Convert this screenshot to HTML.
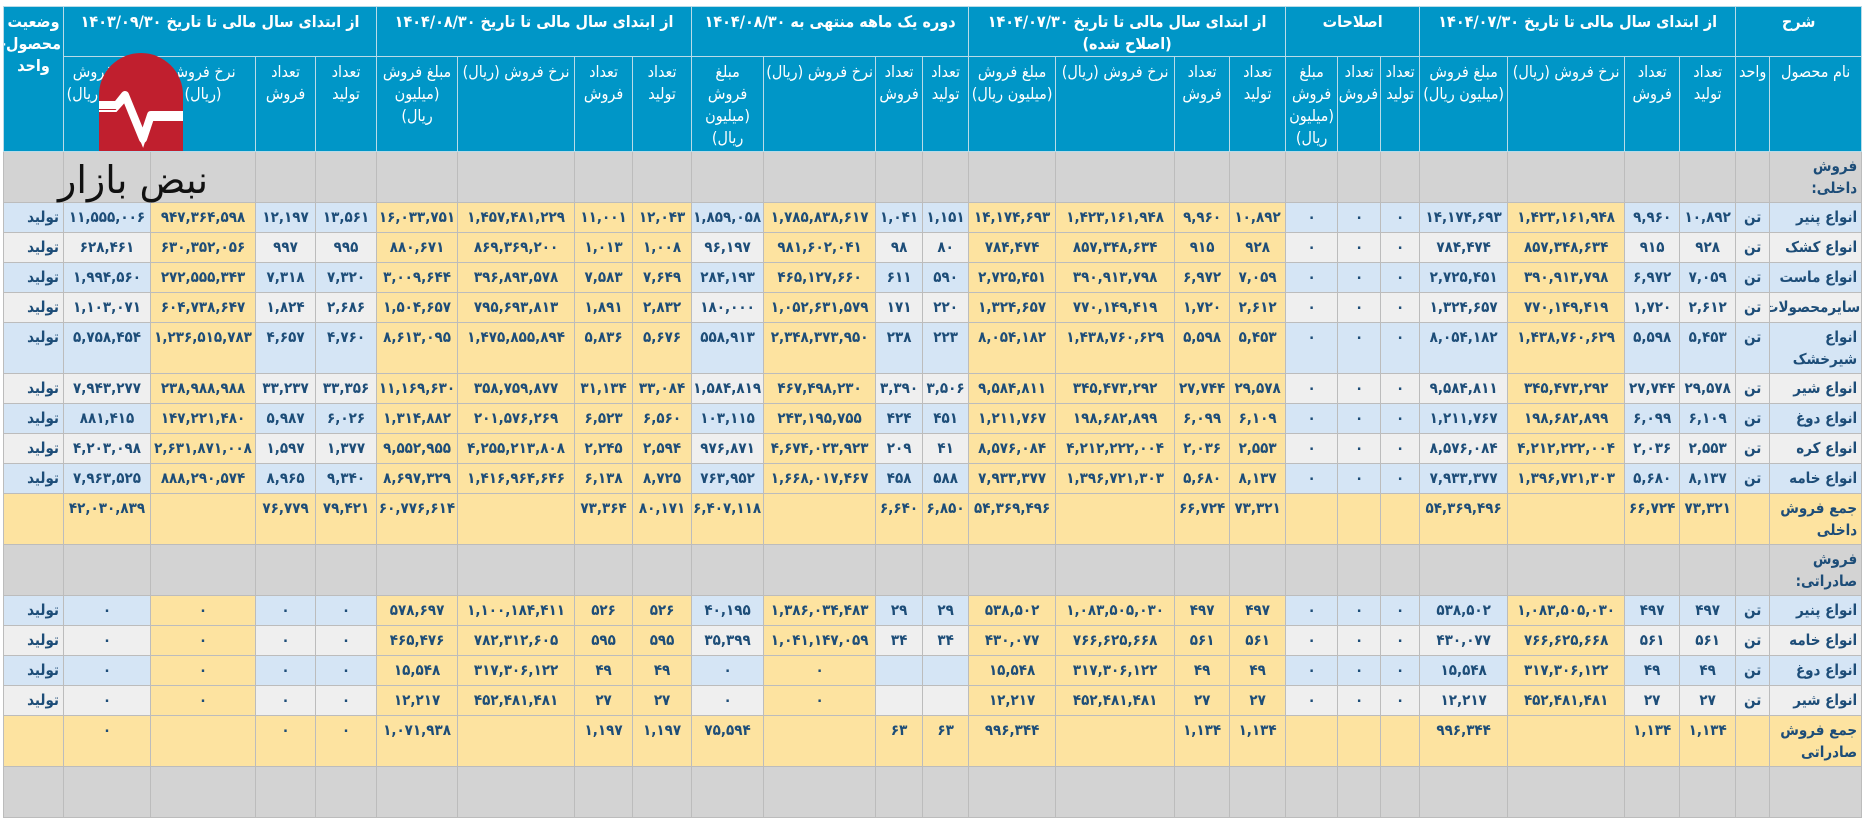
<!DOCTYPE html>
<html><head><meta charset="utf-8">
<style>
html,body{margin:0;padding:0;background:#fff;width:1865px;height:773px;overflow:hidden}
table{position:absolute;left:3px;top:6px;width:1858px;border-collapse:collapse;table-layout:fixed;direction:rtl;font-family:"DejaVu Sans Condensed","DejaVu Sans","Liberation Sans",sans-serif;font-size:15px;color:#1d4d78}
td,th{border:1px solid #bcbcbc;padding:0 2px;overflow:hidden;white-space:nowrap;text-align:center;vertical-align:top;font-weight:bold;box-sizing:border-box}
td{line-height:18px;padding-top:5px}
th{background:#0096c7;color:#fff;font-weight:normal;font-size:16px;line-height:22px;padding-top:4px;white-space:normal;border-color:#b9dbe8}
tr.h1 th{font-weight:bold;height:50px}
tr.h2 th{height:95px}
td.n{text-align:right;padding-right:4px;white-space:normal;line-height:22px;padding-top:3px}
.b td{background:#d5e5f5}.g td{background:#efefef}
td.y,.t td{background:#fde3a0}
.s td{background:#d3d3d3;height:51px}
tr.r td{height:30px}
tr.t td{height:51px}
.logo{position:absolute;left:99px;top:53px}
.brand{position:absolute;left:58px;top:158px;font-family:"DejaVu Sans","Liberation Sans",sans-serif;font-size:38px;color:#111;direction:rtl}
</style></head><body>
<table>
<colgroup>
<col style="width:92px"><col style="width:34px">
<col style="width:56px"><col style="width:55px"><col style="width:117px"><col style="width:88px">
<col style="width:39px"><col style="width:43px"><col style="width:52px">
<col style="width:56px"><col style="width:55px"><col style="width:119px"><col style="width:87px">
<col style="width:46px"><col style="width:47px"><col style="width:112px"><col style="width:72px">
<col style="width:59px"><col style="width:58px"><col style="width:117px"><col style="width:81px">
<col style="width:61px"><col style="width:60px"><col style="width:105px"><col style="width:87px">
<col style="width:60px">
</colgroup>
<tr class="h1">
<th colspan="2">شرح</th>
<th colspan="4">از ابتدای سال مالی تا تاریخ ۱۴۰۴/۰۷/۳۰</th>
<th colspan="3">اصلاحات</th>
<th colspan="4">از ابتدای سال مالی تا تاریخ ۱۴۰۴/۰۷/۳۰ (اصلاح شده)</th>
<th colspan="4">دوره یک ماهه منتهی به ۱۴۰۴/۰۸/۳۰</th>
<th colspan="4">از ابتدای سال مالی تا تاریخ ۱۴۰۴/۰۸/۳۰</th>
<th colspan="4">از ابتدای سال مالی تا تاریخ ۱۴۰۳/۰۹/۳۰</th>
<th rowspan="2" style="font-weight:bold">وضعیت محصول-واحد</th>
</tr>
<tr class="h2">
<th>نام محصول</th><th>واحد</th>
<th>تعداد تولید</th><th>تعداد فروش</th><th>نرخ فروش (ریال)</th><th>مبلغ فروش (میلیون ریال)</th>
<th>تعداد تولید</th><th>تعداد فروش</th><th>مبلغ فروش (میلیون ریال)</th>
<th>تعداد تولید</th><th>تعداد فروش</th><th>نرخ فروش (ریال)</th><th>مبلغ فروش (میلیون ریال)</th>
<th>تعداد تولید</th><th>تعداد فروش</th><th>نرخ فروش (ریال)</th><th>مبلغ فروش (میلیون ریال)</th>
<th>تعداد تولید</th><th>تعداد فروش</th><th>نرخ فروش (ریال)</th><th>مبلغ فروش (میلیون ریال)</th>
<th>تعداد تولید</th><th>تعداد فروش</th><th>نرخ فروش (ریال)</th><th>مبلغ فروش (میلیون ریال)</th>
</tr>
<tr class="s"><td class="n">فروش داخلی:</td><td></td><td></td><td></td><td></td><td></td><td></td><td></td><td></td><td></td><td></td><td></td><td></td><td></td><td></td><td></td><td></td><td></td><td></td><td></td><td></td><td></td><td></td><td></td><td></td><td></td></tr>
<tr class="r b"><td class="n">انواع پنیر</td><td>تن</td><td>۱۰,۸۹۲</td><td>۹,۹۶۰</td><td class="y">۱,۴۲۳,۱۶۱,۹۴۸</td><td>۱۴,۱۷۴,۶۹۳</td><td>۰</td><td>۰</td><td>۰</td><td class="y">۱۰,۸۹۲</td><td class="y">۹,۹۶۰</td><td class="y">۱,۴۲۳,۱۶۱,۹۴۸</td><td class="y">۱۴,۱۷۴,۶۹۳</td><td>۱,۱۵۱</td><td>۱,۰۴۱</td><td class="y">۱,۷۸۵,۸۳۸,۶۱۷</td><td>۱,۸۵۹,۰۵۸</td><td class="y">۱۲,۰۴۳</td><td class="y">۱۱,۰۰۱</td><td class="y">۱,۴۵۷,۴۸۱,۲۲۹</td><td class="y">۱۶,۰۳۳,۷۵۱</td><td>۱۳,۵۶۱</td><td>۱۲,۱۹۷</td><td class="y">۹۴۷,۳۶۴,۵۹۸</td><td>۱۱,۵۵۵,۰۰۶</td><td class="n">تولید</td></tr>
<tr class="r g"><td class="n">انواع کشک</td><td>تن</td><td>۹۲۸</td><td>۹۱۵</td><td class="y">۸۵۷,۳۴۸,۶۳۴</td><td>۷۸۴,۴۷۴</td><td>۰</td><td>۰</td><td>۰</td><td class="y">۹۲۸</td><td class="y">۹۱۵</td><td class="y">۸۵۷,۳۴۸,۶۳۴</td><td class="y">۷۸۴,۴۷۴</td><td>۸۰</td><td>۹۸</td><td class="y">۹۸۱,۶۰۲,۰۴۱</td><td>۹۶,۱۹۷</td><td class="y">۱,۰۰۸</td><td class="y">۱,۰۱۳</td><td class="y">۸۶۹,۳۶۹,۲۰۰</td><td class="y">۸۸۰,۶۷۱</td><td>۹۹۵</td><td>۹۹۷</td><td class="y">۶۳۰,۳۵۲,۰۵۶</td><td>۶۲۸,۴۶۱</td><td class="n">تولید</td></tr>
<tr class="r b"><td class="n">انواع ماست</td><td>تن</td><td>۷,۰۵۹</td><td>۶,۹۷۲</td><td class="y">۳۹۰,۹۱۳,۷۹۸</td><td>۲,۷۲۵,۴۵۱</td><td>۰</td><td>۰</td><td>۰</td><td class="y">۷,۰۵۹</td><td class="y">۶,۹۷۲</td><td class="y">۳۹۰,۹۱۳,۷۹۸</td><td class="y">۲,۷۲۵,۴۵۱</td><td>۵۹۰</td><td>۶۱۱</td><td class="y">۴۶۵,۱۲۷,۶۶۰</td><td>۲۸۴,۱۹۳</td><td class="y">۷,۶۴۹</td><td class="y">۷,۵۸۳</td><td class="y">۳۹۶,۸۹۳,۵۷۸</td><td class="y">۳,۰۰۹,۶۴۴</td><td>۷,۳۲۰</td><td>۷,۳۱۸</td><td class="y">۲۷۲,۵۵۵,۳۴۳</td><td>۱,۹۹۴,۵۶۰</td><td class="n">تولید</td></tr>
<tr class="r g"><td class="n" style="white-space:nowrap;padding-right:1px">سایرمحصولات</td><td>تن</td><td>۲,۶۱۲</td><td>۱,۷۲۰</td><td class="y">۷۷۰,۱۴۹,۴۱۹</td><td>۱,۳۲۴,۶۵۷</td><td>۰</td><td>۰</td><td>۰</td><td class="y">۲,۶۱۲</td><td class="y">۱,۷۲۰</td><td class="y">۷۷۰,۱۴۹,۴۱۹</td><td class="y">۱,۳۲۴,۶۵۷</td><td>۲۲۰</td><td>۱۷۱</td><td class="y">۱,۰۵۲,۶۳۱,۵۷۹</td><td>۱۸۰,۰۰۰</td><td class="y">۲,۸۳۲</td><td class="y">۱,۸۹۱</td><td class="y">۷۹۵,۶۹۳,۸۱۳</td><td class="y">۱,۵۰۴,۶۵۷</td><td>۲,۶۸۶</td><td>۱,۸۲۴</td><td class="y">۶۰۴,۷۳۸,۶۴۷</td><td>۱,۱۰۳,۰۷۱</td><td class="n">تولید</td></tr>
<tr class="b"><td class="n" style="height:51px">انواع شیرخشک</td><td>تن</td><td>۵,۴۵۳</td><td>۵,۵۹۸</td><td class="y">۱,۴۳۸,۷۶۰,۶۲۹</td><td>۸,۰۵۴,۱۸۲</td><td>۰</td><td>۰</td><td>۰</td><td class="y">۵,۴۵۳</td><td class="y">۵,۵۹۸</td><td class="y">۱,۴۳۸,۷۶۰,۶۲۹</td><td class="y">۸,۰۵۴,۱۸۲</td><td>۲۲۳</td><td>۲۳۸</td><td class="y">۲,۳۴۸,۳۷۳,۹۵۰</td><td>۵۵۸,۹۱۳</td><td class="y">۵,۶۷۶</td><td class="y">۵,۸۳۶</td><td class="y">۱,۴۷۵,۸۵۵,۸۹۴</td><td class="y">۸,۶۱۳,۰۹۵</td><td>۴,۷۶۰</td><td>۴,۶۵۷</td><td class="y">۱,۲۳۶,۵۱۵,۷۸۳</td><td>۵,۷۵۸,۴۵۴</td><td class="n">تولید</td></tr>
<tr class="r g"><td class="n">انواع شیر</td><td>تن</td><td>۲۹,۵۷۸</td><td>۲۷,۷۴۴</td><td class="y">۳۴۵,۴۷۳,۲۹۲</td><td>۹,۵۸۴,۸۱۱</td><td>۰</td><td>۰</td><td>۰</td><td class="y">۲۹,۵۷۸</td><td class="y">۲۷,۷۴۴</td><td class="y">۳۴۵,۴۷۳,۲۹۲</td><td class="y">۹,۵۸۴,۸۱۱</td><td>۳,۵۰۶</td><td>۳,۳۹۰</td><td class="y">۴۶۷,۴۹۸,۲۳۰</td><td>۱,۵۸۴,۸۱۹</td><td class="y">۳۳,۰۸۴</td><td class="y">۳۱,۱۳۴</td><td class="y">۳۵۸,۷۵۹,۸۷۷</td><td class="y">۱۱,۱۶۹,۶۳۰</td><td>۳۳,۳۵۶</td><td>۳۳,۲۳۷</td><td class="y">۲۳۸,۹۸۸,۹۸۸</td><td>۷,۹۴۳,۲۷۷</td><td class="n">تولید</td></tr>
<tr class="r b"><td class="n">انواع دوغ</td><td>تن</td><td>۶,۱۰۹</td><td>۶,۰۹۹</td><td class="y">۱۹۸,۶۸۲,۸۹۹</td><td>۱,۲۱۱,۷۶۷</td><td>۰</td><td>۰</td><td>۰</td><td class="y">۶,۱۰۹</td><td class="y">۶,۰۹۹</td><td class="y">۱۹۸,۶۸۲,۸۹۹</td><td class="y">۱,۲۱۱,۷۶۷</td><td>۴۵۱</td><td>۴۲۴</td><td class="y">۲۴۳,۱۹۵,۷۵۵</td><td>۱۰۳,۱۱۵</td><td class="y">۶,۵۶۰</td><td class="y">۶,۵۲۳</td><td class="y">۲۰۱,۵۷۶,۲۶۹</td><td class="y">۱,۳۱۴,۸۸۲</td><td>۶,۰۲۶</td><td>۵,۹۸۷</td><td class="y">۱۴۷,۲۲۱,۴۸۰</td><td>۸۸۱,۴۱۵</td><td class="n">تولید</td></tr>
<tr class="r g"><td class="n">انواع کره</td><td>تن</td><td>۲,۵۵۳</td><td>۲,۰۳۶</td><td class="y">۴,۲۱۲,۲۲۲,۰۰۴</td><td>۸,۵۷۶,۰۸۴</td><td>۰</td><td>۰</td><td>۰</td><td class="y">۲,۵۵۳</td><td class="y">۲,۰۳۶</td><td class="y">۴,۲۱۲,۲۲۲,۰۰۴</td><td class="y">۸,۵۷۶,۰۸۴</td><td>۴۱</td><td>۲۰۹</td><td class="y">۴,۶۷۴,۰۲۳,۹۲۳</td><td>۹۷۶,۸۷۱</td><td class="y">۲,۵۹۴</td><td class="y">۲,۲۴۵</td><td class="y">۴,۲۵۵,۲۱۳,۸۰۸</td><td class="y">۹,۵۵۲,۹۵۵</td><td>۱,۳۷۷</td><td>۱,۵۹۷</td><td class="y">۲,۶۳۱,۸۷۱,۰۰۸</td><td>۴,۲۰۳,۰۹۸</td><td class="n">تولید</td></tr>
<tr class="r b"><td class="n">انواع خامه</td><td>تن</td><td>۸,۱۳۷</td><td>۵,۶۸۰</td><td class="y">۱,۳۹۶,۷۲۱,۳۰۳</td><td>۷,۹۳۳,۳۷۷</td><td>۰</td><td>۰</td><td>۰</td><td class="y">۸,۱۳۷</td><td class="y">۵,۶۸۰</td><td class="y">۱,۳۹۶,۷۲۱,۳۰۳</td><td class="y">۷,۹۳۳,۳۷۷</td><td>۵۸۸</td><td>۴۵۸</td><td class="y">۱,۶۶۸,۰۱۷,۴۶۷</td><td>۷۶۳,۹۵۲</td><td class="y">۸,۷۲۵</td><td class="y">۶,۱۳۸</td><td class="y">۱,۴۱۶,۹۶۴,۶۴۶</td><td class="y">۸,۶۹۷,۳۲۹</td><td>۹,۳۴۰</td><td>۸,۹۶۵</td><td class="y">۸۸۸,۲۹۰,۵۷۴</td><td>۷,۹۶۳,۵۲۵</td><td class="n">تولید</td></tr>
<tr class="t"><td class="n">جمع فروش داخلی</td><td></td><td>۷۳,۳۲۱</td><td>۶۶,۷۲۴</td><td></td><td>۵۴,۳۶۹,۴۹۶</td><td></td><td></td><td></td><td>۷۳,۳۲۱</td><td>۶۶,۷۲۴</td><td></td><td>۵۴,۳۶۹,۴۹۶</td><td>۶,۸۵۰</td><td>۶,۶۴۰</td><td></td><td>۶,۴۰۷,۱۱۸</td><td>۸۰,۱۷۱</td><td>۷۳,۳۶۴</td><td></td><td>۶۰,۷۷۶,۶۱۴</td><td>۷۹,۴۲۱</td><td>۷۶,۷۷۹</td><td></td><td>۴۲,۰۳۰,۸۳۹</td><td></td></tr>
<tr class="s"><td class="n">فروش صادراتی:</td><td></td><td></td><td></td><td></td><td></td><td></td><td></td><td></td><td></td><td></td><td></td><td></td><td></td><td></td><td></td><td></td><td></td><td></td><td></td><td></td><td></td><td></td><td></td><td></td><td></td></tr>
<tr class="r b"><td class="n">انواع پنیر</td><td>تن</td><td>۴۹۷</td><td>۴۹۷</td><td class="y">۱,۰۸۳,۵۰۵,۰۳۰</td><td>۵۳۸,۵۰۲</td><td>۰</td><td>۰</td><td>۰</td><td class="y">۴۹۷</td><td class="y">۴۹۷</td><td class="y">۱,۰۸۳,۵۰۵,۰۳۰</td><td class="y">۵۳۸,۵۰۲</td><td>۲۹</td><td>۲۹</td><td class="y">۱,۳۸۶,۰۳۴,۴۸۳</td><td>۴۰,۱۹۵</td><td class="y">۵۲۶</td><td class="y">۵۲۶</td><td class="y">۱,۱۰۰,۱۸۴,۴۱۱</td><td class="y">۵۷۸,۶۹۷</td><td>۰</td><td>۰</td><td class="y">۰</td><td>۰</td><td class="n">تولید</td></tr>
<tr class="r g"><td class="n">انواع خامه</td><td>تن</td><td>۵۶۱</td><td>۵۶۱</td><td class="y">۷۶۶,۶۲۵,۶۶۸</td><td>۴۳۰,۰۷۷</td><td>۰</td><td>۰</td><td>۰</td><td class="y">۵۶۱</td><td class="y">۵۶۱</td><td class="y">۷۶۶,۶۲۵,۶۶۸</td><td class="y">۴۳۰,۰۷۷</td><td>۳۴</td><td>۳۴</td><td class="y">۱,۰۴۱,۱۴۷,۰۵۹</td><td>۳۵,۳۹۹</td><td class="y">۵۹۵</td><td class="y">۵۹۵</td><td class="y">۷۸۲,۳۱۲,۶۰۵</td><td class="y">۴۶۵,۴۷۶</td><td>۰</td><td>۰</td><td class="y">۰</td><td>۰</td><td class="n">تولید</td></tr>
<tr class="r b"><td class="n">انواع دوغ</td><td>تن</td><td>۴۹</td><td>۴۹</td><td class="y">۳۱۷,۳۰۶,۱۲۲</td><td>۱۵,۵۴۸</td><td>۰</td><td>۰</td><td>۰</td><td class="y">۴۹</td><td class="y">۴۹</td><td class="y">۳۱۷,۳۰۶,۱۲۲</td><td class="y">۱۵,۵۴۸</td><td></td><td></td><td class="y">۰</td><td>۰</td><td class="y">۴۹</td><td class="y">۴۹</td><td class="y">۳۱۷,۳۰۶,۱۲۲</td><td class="y">۱۵,۵۴۸</td><td>۰</td><td>۰</td><td class="y">۰</td><td>۰</td><td class="n">تولید</td></tr>
<tr class="r g"><td class="n">انواع شیر</td><td>تن</td><td>۲۷</td><td>۲۷</td><td class="y">۴۵۲,۴۸۱,۴۸۱</td><td>۱۲,۲۱۷</td><td>۰</td><td>۰</td><td>۰</td><td class="y">۲۷</td><td class="y">۲۷</td><td class="y">۴۵۲,۴۸۱,۴۸۱</td><td class="y">۱۲,۲۱۷</td><td></td><td></td><td class="y">۰</td><td>۰</td><td class="y">۲۷</td><td class="y">۲۷</td><td class="y">۴۵۲,۴۸۱,۴۸۱</td><td class="y">۱۲,۲۱۷</td><td>۰</td><td>۰</td><td class="y">۰</td><td>۰</td><td class="n">تولید</td></tr>
<tr class="t"><td class="n">جمع فروش صادراتی</td><td></td><td>۱,۱۳۴</td><td>۱,۱۳۴</td><td></td><td>۹۹۶,۳۴۴</td><td></td><td></td><td></td><td>۱,۱۳۴</td><td>۱,۱۳۴</td><td></td><td>۹۹۶,۳۴۴</td><td>۶۳</td><td>۶۳</td><td></td><td>۷۵,۵۹۴</td><td>۱,۱۹۷</td><td>۱,۱۹۷</td><td></td><td>۱,۰۷۱,۹۳۸</td><td>۰</td><td>۰</td><td></td><td>۰</td><td></td></tr>
<tr class="s"><td></td><td></td><td></td><td></td><td></td><td></td><td></td><td></td><td></td><td></td><td></td><td></td><td></td><td></td><td></td><td></td><td></td><td></td><td></td><td></td><td></td><td></td><td></td><td></td><td></td><td></td></tr>
</table>
<svg class="logo" width="84" height="98" viewBox="0 0 84 98">
<path d="M0 98 V42 A42 42 0 0 1 84 42 V98 Z" fill="#c01f2e"/>
<polyline points="-2,52 18,52 26,42 44,86 52,62 86,62" fill="none" stroke="#fff" stroke-width="8" stroke-linejoin="round"/>
<polyline points="-2,58 17,58 26,48 44,92 52,67 86,67" fill="none" stroke="#fff" stroke-width="2"/>
</svg>
<div class="brand">نبض بازار</div>
</body></html>
